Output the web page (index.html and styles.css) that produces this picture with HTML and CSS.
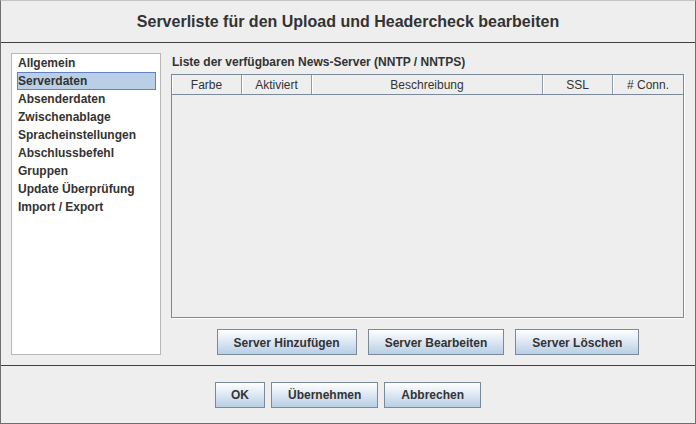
FILE: index.html
```html
<!DOCTYPE html>
<html lang="de">
<head>
    <meta charset="UTF-8">
    <meta name="viewport" content="width=device-width, initial-scale=1.0">
    <title>Serverliste</title>
    <link rel="stylesheet" href="styles.css">
</head>
<body>
    <div class="dialog">
        <div class="dialog-title">Serverliste für den Upload und Headercheck bearbeiten</div>
        <div class="dialog-body">
            <ul class="nav-list">
                <li>Allgemein</li>
                <li class="selected">Serverdaten</li>
                <li>Absenderdaten</li>
                <li>Zwischenablage</li>
                <li>Spracheinstellungen</li>
                <li>Abschlussbefehl</li>
                <li>Gruppen</li>
                <li>Update Überprüfung</li>
                <li>Import / Export</li>
            </ul>
            <div class="server-panel">
                <div class="panel-label">Liste der verfügbaren News-Server (NNTP / NNTPS)</div>
                <div class="server-table">
                    <div class="table-head">
                        <div class="head-cell">Farbe</div>
                        <div class="head-cell">Aktiviert</div>
                        <div class="head-cell">Beschreibung</div>
                        <div class="head-cell">SSL</div>
                        <div class="head-cell">#&nbsp;Conn.</div>
                    </div>
                    <div class="table-body"></div>
                </div>
                <div class="panel-actions">
                    <button class="btn">Server Hinzufügen</button>
                    <button class="btn">Server Bearbeiten</button>
                    <button class="btn">Server Löschen</button>
                </div>
            </div>
        </div>
        <div class="dialog-actions">
            <button class="btn">OK</button>
            <button class="btn">Übernehmen</button>
            <button class="btn">Abbrechen</button>
        </div>
    </div>
</body>
</html>
```

FILE: styles.css
```css
body {
    margin: 0;
    background-color: #eeeeee;
    font-family: "Liberation Sans", Arial, sans-serif;
    color: #333333;
}
.dialog {
    width: 696px;
    height: 424px;
    box-sizing: border-box;
    display: flex;
    flex-direction: column;
    background-color: #eeeeee;
    border: 1px solid #6f6f6f;
    border-top-color: #c4c4c4;
}
.dialog-title {
    height: 41px;
    line-height: 42px;
    text-align: center;
    font-size: 16px;
    font-weight: bold;
    border-bottom: 1px solid #404040;
}
.dialog-body {
    height: 323px;
    box-sizing: border-box;
    padding: 10px;
    display: flex;
    gap: 10px;
    border-bottom: 1px solid #404040;
}
.nav-list {
    width: 150px;
    box-sizing: border-box;
    margin: 0;
    padding: 0 4px 0 5px;
    list-style: none;
    background-color: #ffffff;
    border: 1px solid #b8b8b8;
    font-size: 12px;
    font-weight: bold;
}
.nav-list li {
    height: 18px;
    line-height: 18px;
    padding: 0 1px;
}
.nav-list li.selected {
    background-color: #b8cfe5;
    box-shadow: inset 0 0 0 1px #6382bf;
}
.server-panel {
    flex: 1;
    display: flex;
    flex-direction: column;
}
.panel-label {
    font-size: 12px;
    font-weight: bold;
    line-height: 18px;
    margin-bottom: 3px;
    padding-left: 1px;
}
.server-table {
    flex: 1;
    margin-right: 1px;
    display: flex;
    flex-direction: column;
    border: 1px solid #7a8a99;
    box-shadow: 1px 1px 0 #ffffff;
}
.table-head {
    display: grid;
    grid-template-columns: 70px 70px 1fr 70px 70px;
    border-bottom: 1px solid #7a8a99;
}
.head-cell {
    height: 19px;
    line-height: 20px;
    text-align: center;
    font-size: 12px;
    border-right: 1px solid #8d9cab;
    box-shadow: inset 1px 0 0 #ffffff;
}
.head-cell:last-child {
    border-right: none;
}
.table-body {
    flex: 1;
    background-color: #eeeeee;
}
.panel-actions {
    margin-top: 11px;
    display: flex;
    justify-content: center;
    gap: 11px;
}
.dialog-actions {
    flex: 1;
    display: flex;
    justify-content: center;
    align-items: center;
    gap: 6px;
}
.btn {
    height: 26px;
    padding: 1px 16px 0;
    font-family: "Liberation Sans", Arial, sans-serif;
    font-size: 12px;
    font-weight: bold;
    color: #333333;
    border: 1px solid #7a8a99;
    border-radius: 0;
    background: linear-gradient(#ffffff, #dfe9f4 45%, #b8cfe5);
}
.dialog-actions .btn:first-child {
    padding: 1px 15px 0;
}
```
